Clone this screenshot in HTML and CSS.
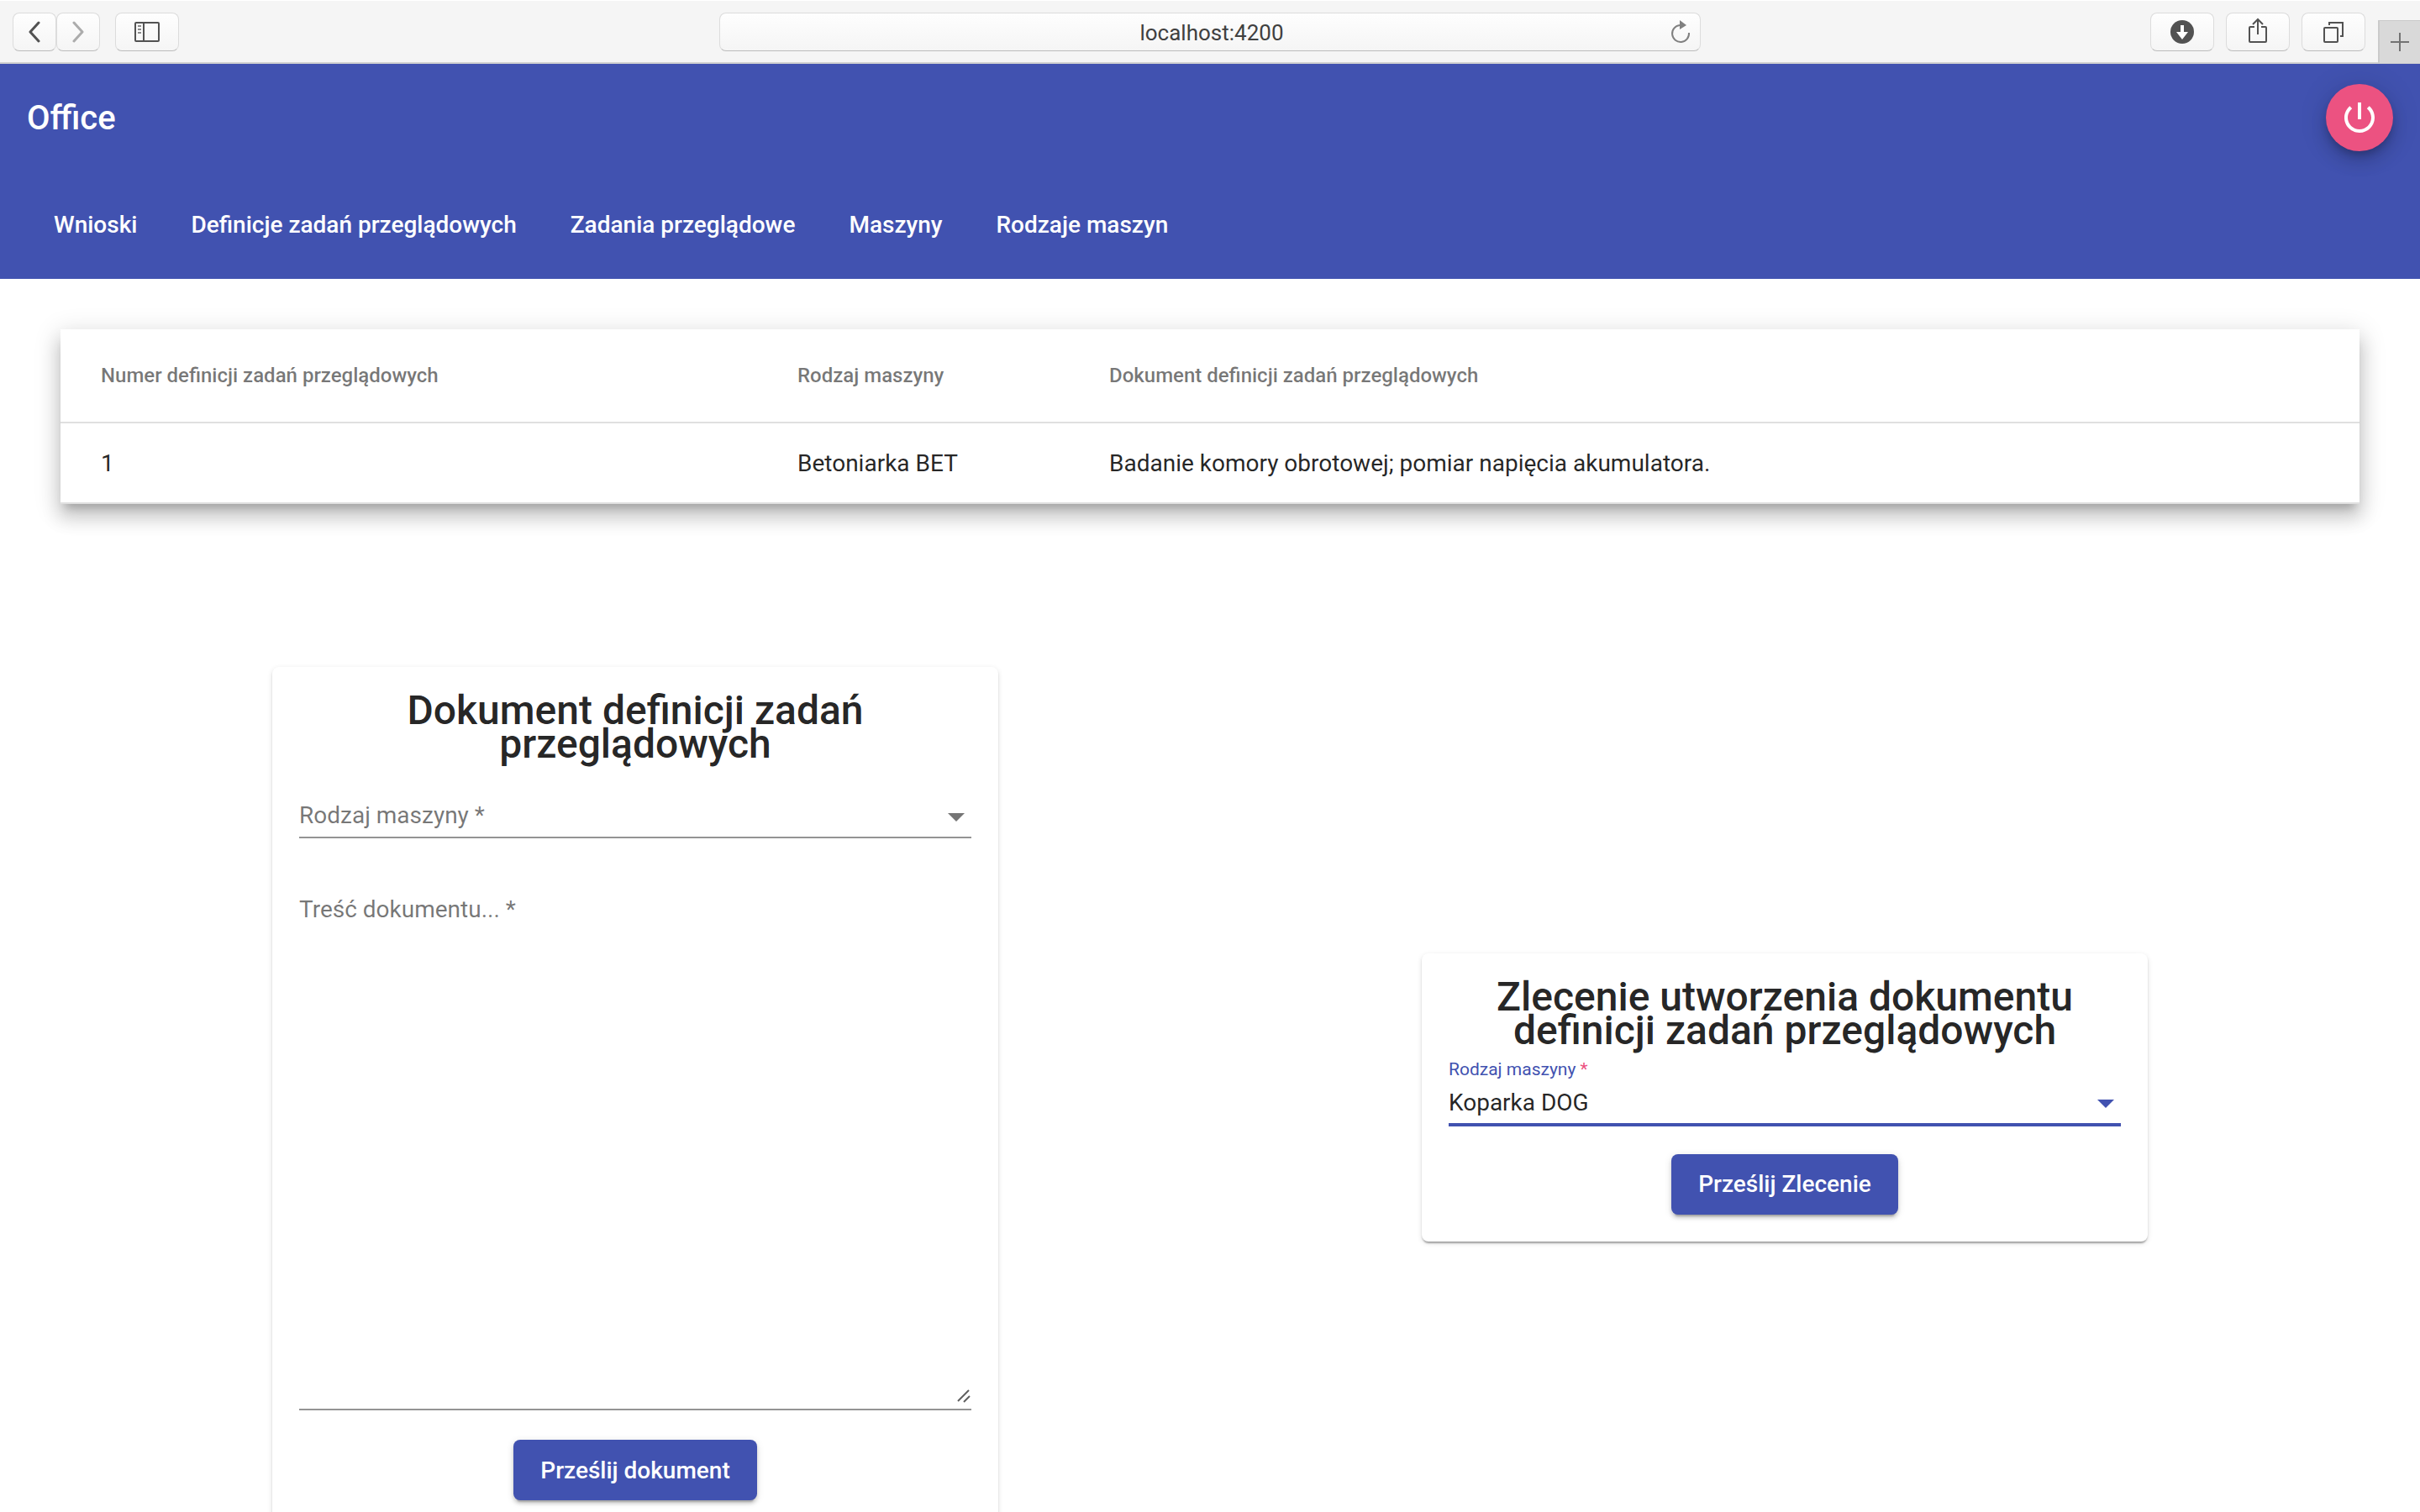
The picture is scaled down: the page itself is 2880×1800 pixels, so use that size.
FILE: index.html
```html
<!DOCTYPE html>
<html lang="pl">
<head>
<meta charset="utf-8">
<title>Office</title>
<link rel="stylesheet" href="styles.css">
</head>
<body>
<div class="window">
  <header class="chrome">
    <div class="chrome-left">
      <div class="chrome-history">
        <button class="chrome-btn chrome-btn-narrow" type="button" aria-label="Wstecz">
          <svg width="16" height="26" viewBox="0 0 16 26"><path d="M13 2 3 13l10 11" fill="none" stroke="#525252" stroke-width="3" stroke-linecap="round" stroke-linejoin="round"/></svg>
        </button>
        <button class="chrome-btn chrome-btn-narrow" type="button" aria-label="Dalej">
          <svg width="16" height="26" viewBox="0 0 16 26"><path d="m3 2 10 11L3 24" fill="none" stroke="#acacac" stroke-width="3" stroke-linecap="round" stroke-linejoin="round"/></svg>
        </button>
      </div>
      <button class="chrome-btn" type="button" aria-label="Pasek boczny">
        <svg width="32" height="26" viewBox="0 0 32 26"><rect x="2" y="2" width="28" height="22" rx="1" fill="none" stroke="#525252" stroke-width="2"/><path d="M12 2v22" stroke="#525252" stroke-width="2"/><path d="M5 6h4M5 10h4M5 14h4" stroke="#8a8a8a" stroke-width="2"/></svg>
      </button>
    </div>
    <div class="address">
      <input class="address-input" type="text" value="localhost:4200" aria-label="Adres">
      <button class="reload" type="button" aria-label="Odśwież">
        <svg width="26" height="28" viewBox="0 0 26 28"><path d="M12 6a10 10 0 1 0 11 9" fill="none" stroke="#808080" stroke-width="2"/><path d="M12 0v11l8-5z" fill="#808080"/></svg>
      </button>
    </div>
    <div class="chrome-right">
      <button class="chrome-btn" type="button" aria-label="Pobrane">
        <svg width="28" height="28" viewBox="0 0 28 28"><circle cx="14" cy="14" r="14" fill="#525252"/><path d="M12 6h4v8h5l-7 9-7-9h5z" fill="#fff"/></svg>
      </button>
      <button class="chrome-btn" type="button" aria-label="Udostępnij">
        <svg class="share-icon" width="24" height="32" viewBox="0 0 24 32"><path d="M8 12H3q-1 0-1 1v16q0 1 1 1h18q1 0 1-1V13q0-1-1-1h-5M12 21V3M6 9l6-6 6 6" fill="none" stroke="#525252" stroke-width="2"/></svg>
      </button>
      <button class="chrome-btn" type="button" aria-label="Karty">
        <svg width="24" height="26" viewBox="0 0 24 26"><rect x="1" y="8" width="16" height="17" rx="1" fill="none" stroke="#525252" stroke-width="2"/><path d="M7 5V2h16v16h-3" fill="none" stroke="#525252" stroke-width="2"/></svg>
      </button>
      <button class="new-tab" type="button" aria-label="Nowa karta">
        <svg width="22" height="22" viewBox="0 0 22 22"><path d="M11 0v22M0 11h22" stroke="#737373" stroke-width="2"/></svg>
      </button>
    </div>
  </header>

  <div class="page">
    <header class="toolbar">
      <div class="toolbar-row">
        <h1 class="brand">Office</h1>
        <button class="fab" type="button" aria-label="Wyloguj">
          <svg width="48" height="48" viewBox="0 0 24 24"><path fill="#fff" d="M13 3h-2v10h2V3zm4.830 2.170-1.420 1.420C17.990 7.860 19 9.810 19 12c0 3.870-3.130 7-7 7s-7-3.130-7-7c0-2.190 1.010-4.140 2.580-5.420L6.170 5.170C4.230 6.820 3 9.260 3 12c0 4.970 4.030 9 9 9s9-4.030 9-9c0-2.740-1.230-5.180-3.170-6.830z"/></svg>
        </button>
      </div>
      <nav class="toolbar-row">
        <a class="nav-link" href="#">Wnioski</a>
        <a class="nav-link" href="#">Definicje zadań przeglądowych</a>
        <a class="nav-link" href="#">Zadania przeglądowe</a>
        <a class="nav-link" href="#">Maszyny</a>
        <a class="nav-link" href="#">Rodzaje maszyn</a>
      </nav>
    </header>

    <main class="content">
      <table class="definitions">
        <thead>
          <tr><th class="col-number">Numer definicji zadań przeglądowych</th><th class="col-kind">Rodzaj maszyny</th><th>Dokument definicji zadań przeglądowych</th></tr>
        </thead>
        <tbody>
          <tr><td>1</td><td>Betoniarka BET</td><td>Badanie komory obrotowej; pomiar napięcia akumulatora.</td></tr>
        </tbody>
      </table>

      <div class="forms">
        <form class="card">
          <h2 class="card-title">Dokument definicji zadań przeglądowych</h2>
          <div class="field field-spaced">
            <label class="field-label" for="doc-kind">Rodzaj maszyny *</label>
            <div class="select-box">
              <select id="doc-kind" class="control" required><option value=""></option></select>
            </div>
          </div>
          <div class="field">
            <label class="field-label" for="doc-text">Treść dokumentu... *</label>
            <textarea id="doc-text" class="control control-area" required></textarea>
            <svg class="grip" width="18" height="18" viewBox="0 0 18 18"><path d="M2 15 15 2M9 16l7-7" fill="none" stroke="#606060" stroke-width="2"/></svg>
          </div>
          <button class="submit" type="button">Prześlij dokument</button>
        </form>

        <form class="card">
          <h2 class="card-title">Zlecenie utworzenia dokumentu definicji zadań przeglądowych</h2>
          <div class="field field-active">
            <label class="field-label" for="order-kind">Rodzaj maszyny <span class="required">*</span></label>
            <div class="select-box">
              <select id="order-kind" class="control" required><option>Koparka DOG</option></select>
            </div>
          </div>
          <button class="submit" type="button">Prześlij Zlecenie</button>
        </form>
      </div>
    </main>
  </div>
</div>
</body>
</html>
```
FILE: styles.css
```css
* {
  box-sizing: border-box;
}

body {
  margin: 0;
  background: #fff;
  color: rgba(0, 0, 0, 0.87);
  font-family: Roboto, sans-serif;
  font-size: 28px;
}

button,
input,
select,
textarea {
  font: inherit;
  color: inherit;
}

.window {
  display: flex;
  flex-direction: column;
  height: 100vh;
}

/* Browser bar */

.chrome {
  flex: none;
  display: grid;
  grid-template-columns: 1fr minmax(0, 1168px) 1fr;
  height: 76px;
  background: #f5f5f5;
  border-top: 1px solid #fff;
  border-bottom: 2px solid #d0d0d0;
}

.chrome-left,
.chrome-right,
.chrome-history {
  display: flex;
}

.chrome-left {
  gap: 18px;
  padding: 14px 15px;
}

.chrome-right {
  justify-content: flex-end;
  gap: 14px;
  padding-top: 14px;
}

.chrome-btn,
.address {
  height: 46px;
  border: 1px solid #dcdcdc;
  border-bottom-color: #bcbcbc;
  border-radius: 8px;
  background: linear-gradient(#fefefe, #f5f5f5);
}

.chrome-btn {
  display: flex;
  align-items: center;
  justify-content: center;
  width: 76px;
  padding: 0;
}

.chrome-btn-narrow {
  width: 52px;
}

.share-icon {
  margin-bottom: 4px;
}

.address {
  display: flex;
  align-items: center;
  margin-top: 14px;
  padding: 0 10px 0 40px;
}

.address-input {
  flex: 1;
  min-width: 0;
  padding: 2px 0 0;
  border: 0;
  background: none;
  color: #404040;
  font-size: 26px;
  text-align: center;
}

.reload {
  display: flex;
  padding: 0;
  border: 0;
  background: none;
}

.new-tab {
  display: flex;
  align-items: center;
  justify-content: center;
  width: 50px;
  margin: -5px 0 0 1px;
  padding: 0;
  border: 2px solid #cacaca;
  border-width: 1px 0 0 2px;
  background: #d9d9d9;
}

.chrome-right .new-tab {
  margin-top: 9px;
}

/* Application */

.page {
  flex: 1;
  min-height: 0;
  overflow: hidden;
}

.toolbar {
  background: #4152b0;
  color: #fff;
}

.toolbar-row {
  display: flex;
  align-items: center;
  height: 128px;
  padding: 0 32px;
}

.brand {
  flex: 1;
  margin: 0;
  font-size: 40px;
  font-weight: 500;
}

.fab {
  display: flex;
  align-items: center;
  justify-content: center;
  width: 80px;
  height: 80px;
  padding: 0;
  border: 0;
  border-radius: 50%;
  background: #ec5281;
  box-shadow: 0 6px 10px -2px rgba(0, 0, 0, 0.2), 0 12px 20px rgba(0, 0, 0, 0.14), 0 2px 36px rgba(0, 0, 0, 0.12);
}

.nav-link {
  padding: 0 32px;
  color: #fff;
  font-weight: 500;
  line-height: 72px;
  text-decoration: none;
}

.content {
  padding: 60px 72px;
}

.definitions {
  width: 100%;
  border-spacing: 0;
  background: #fff;
  box-shadow: 0 10px 10px -6px rgba(0, 0, 0, 0.2), 0 16px 20px 2px rgba(0, 0, 0, 0.14), 0 6px 28px 4px rgba(0, 0, 0, 0.12);
  text-align: left;
}

.definitions th,
.definitions td {
  padding: 0;
  border-bottom: 2px solid #e0e0e0;
}

.definitions th {
  height: 112px;
  color: rgba(0, 0, 0, 0.54);
  font-size: 24px;
  font-weight: 500;
}

.definitions td {
  height: 96px;
}

.definitions th:first-child,
.definitions td:first-child {
  padding-left: 48px;
}

.col-number {
  width: 877px;
}

.col-kind {
  width: 371px;
}

/* Forms */

.forms {
  display: flex;
  align-items: center;
  justify-content: space-around;
  margin-top: 194px;
}

.card {
  display: flex;
  flex-direction: column;
  width: 864px;
  padding: 32px;
  border-radius: 8px;
  background: #fff;
  box-shadow: 0 4px 2px -2px rgba(0, 0, 0, 0.2), 0 2px 2px rgba(0, 0, 0, 0.14), 0 2px 6px rgba(0, 0, 0, 0.12);
}

.card-title {
  margin: 0;
  font-size: 48px;
  font-weight: 500;
  line-height: 40px;
  text-align: center;
}

.field {
  position: relative;
  padding-top: 44px;
  border-bottom: 2px solid #949494;
}

.field-spaced {
  margin-bottom: 20px;
}

.field-label {
  position: absolute;
  top: 49px;
  left: 0;
  color: rgba(0, 0, 0, 0.54);
  line-height: 32px;
}

.control {
  display: block;
  width: 100%;
  height: 46px;
  margin: 0;
  padding: 6px 40px 8px 0;
  border: 0;
  outline: 0;
  background: none;
  line-height: 32px;
  appearance: none;
}

.control-area {
  height: 615px;
  resize: none;
}

.select-box {
  position: relative;
}

.select-box::after {
  content: "";
  position: absolute;
  top: 18px;
  right: 8px;
  border: 10px solid transparent;
  border-top-color: currentColor;
  border-bottom: 0;
  color: #757575;
  pointer-events: none;
}

.grip {
  position: absolute;
  right: 0;
  bottom: 6px;
}

.field-active {
  margin-bottom: -2px;
  border-bottom: 4px solid #4152b0;
}

.field-active .field-label {
  top: 10px;
  color: #4152b0;
  font-size: 21px;
}

.field-active .select-box::after {
  color: #4152b0;
}

.required {
  color: #ec5281;
}

.submit {
  align-self: center;
  height: 72px;
  margin-top: 35px;
  padding: 0 32px;
  border: 0;
  border-radius: 8px;
  background: #4152b0;
  box-shadow: 0 6px 2px -4px rgba(0, 0, 0, 0.2), 0 4px 4px rgba(0, 0, 0, 0.14), 0 2px 10px rgba(0, 0, 0, 0.12);
  color: #fff;
  font-weight: 500;
}
```
